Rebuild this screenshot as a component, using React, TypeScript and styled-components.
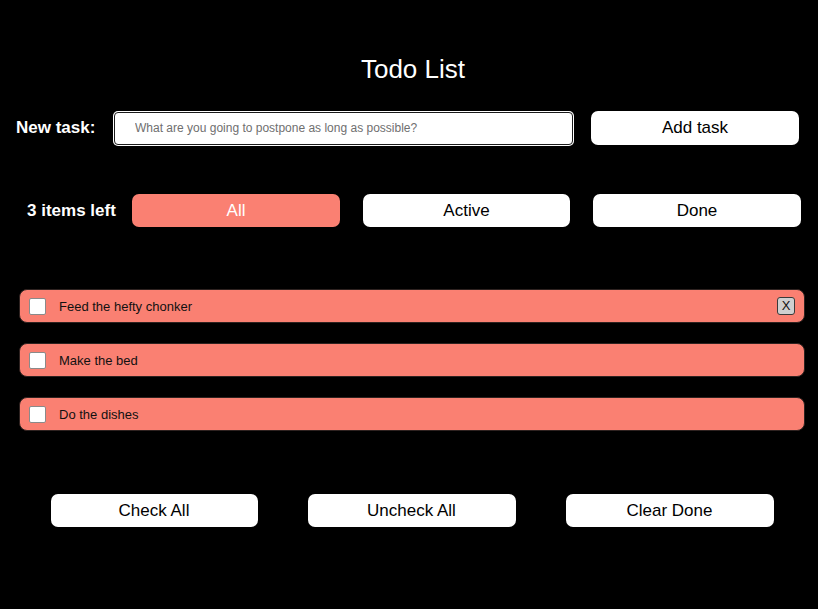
import React, { useState } from "react";
import styled, { createGlobalStyle } from "styled-components";

const Global = createGlobalStyle`
  html, body { margin: 0; padding: 0; background: #000; }
  body { font-family: "Liberation Sans", Arial, sans-serif; }
  * { box-sizing: border-box; }
`;

const Page = styled.div`
  width: 818px;
  height: 609px;
  background: #000;
  padding-top: 54px;
  display: flex;
  flex-direction: column;
`;

const Title = styled.h1`
  margin: 0;
  height: 30px;
  line-height: 30px;
  text-align: center;
  color: #fff;
  font-size: 26px;
  font-weight: 400;
  padding-left: 8px;
`;

const InputRow = styled.div`
  display: flex;
  align-items: center;
  margin-top: 27px;
  padding-left: 16px;
  height: 34px;
`;

const Label = styled.label`
  color: #fff;
  font-weight: 700;
  font-size: 17px;
  width: 98px;
  white-space: nowrap;
`;

const TaskInput = styled.input`
  width: 459px;
  height: 33px;
  border: 1px solid #1a1a1a;
  box-shadow: 0 0 0 1px #fff;
  border-radius: 4px;
  background: #fff;
  padding: 0 0 0 20px;
  font-family: "Liberation Sans", Arial, sans-serif;
  font-size: 12px;
  color: #000;
  outline: none;
  &::placeholder { color: #6f6f6f; }
`;

const Button = styled.button<{ $active?: boolean; $w?: number }>`
  width: ${(p) => p.$w ?? 208}px;
  height: 33px;
  border: none;
  border-radius: 7px;
  background: ${(p) => (p.$active ? "#fa8072" : "#fff")};
  color: ${(p) => (p.$active ? "#fff" : "#000")};
  font-family: "Liberation Sans", Arial, sans-serif;
  font-size: 17px;
  cursor: pointer;
  padding: 0;
`;

const AddButton = styled(Button)`
  margin-left: 18px;
  height: 34px;
`;

const FilterRow = styled.div`
  display: flex;
  align-items: center;
  margin-top: 49px;
  padding-left: 27px;
  gap: 23px;
`;

const Count = styled.span`
  color: #fff;
  font-weight: 700;
  font-size: 17px;
  width: 82px;
  white-space: nowrap;
`;

const List = styled.ul`
  list-style: none;
  margin: 62px 0 0 19px;
  padding: 0;
  width: 786px;
  display: flex;
  flex-direction: column;
  gap: 20px;
`;

const Item = styled.li`
  height: 34px;
  background: #fa8072;
  border: 1px solid #2e2220;
  border-radius: 8px;
  display: flex;
  align-items: center;
  padding: 0 9px 0 9px;
`;

const Check = styled.input`
  appearance: none;
  width: 17px;
  height: 17px;
  margin: 0;
  background: #fff;
  border: 1px solid #8a8a8a;
  border-radius: 2px;
`;

const ItemText = styled.span`
  margin-left: 13px;
  font-size: 13px;
  color: #111;
  flex: 1;
`;

const DeleteButton = styled.button`
  width: 18px;
  height: 18px;
  padding: 0;
  border: 1px solid #3a3a3a;
  border-radius: 3px;
  background: #cfcfcf;
  font-family: "Liberation Sans", Arial, sans-serif;
  font-size: 13px;
  line-height: 16px;
  color: #111;
`;

const BottomRow = styled.div`
  display: flex;
  justify-content: center;
  gap: 50px;
  margin-top: 63px;
  padding-left: 6px;
`;

const todos = ["Feed the hefty chonker", "Make the bed", "Do the dishes"];

export default function App() {
  const [text, setText] = useState("");
  return (
    <>
      <Global />
      <Page>
        <Title>Todo List</Title>
        <InputRow>
          <Label>New task:</Label>
          <TaskInput
            value={text}
            onChange={(e) => setText(e.target.value)}
            placeholder="What are you going to postpone as long as possible?"
          />
          <AddButton>Add task</AddButton>
        </InputRow>
        <FilterRow>
          <Count>3 items left</Count>
          <Button $active>All</Button>
          <Button $w={207}>Active</Button>
          <Button>Done</Button>
        </FilterRow>
        <List>
          {todos.map((t, i) => (
            <Item key={t}>
              <Check type="checkbox" />
              <ItemText>{t}</ItemText>
              {i === 0 && <DeleteButton>X</DeleteButton>}
            </Item>
          ))}
        </List>
        <BottomRow>
          <Button $w={207}>Check All</Button>
          <Button>Uncheck All</Button>
          <Button>Clear Done</Button>
        </BottomRow>
      </Page>
    </>
  );
}
